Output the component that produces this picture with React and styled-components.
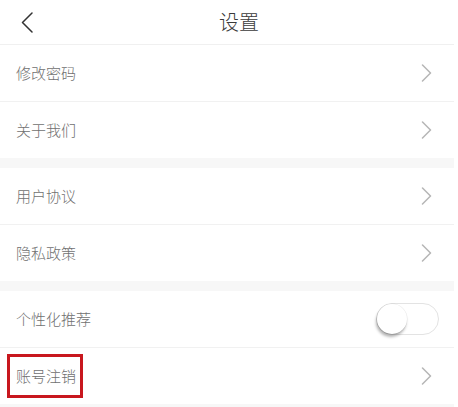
import React, { useState } from 'react';
import styled, { createGlobalStyle } from 'styled-components';

const GlobalStyle = createGlobalStyle`
  html, body {
    margin: 0;
    padding: 0;
    background: #fff;
  }
  body {
    font-family: "Noto Sans CJK SC", "Noto Sans", sans-serif;
  }
`;

const Page = styled.div`
  width: 454px;
  min-height: 407px;
  background: #f7f7f7;
`;

const Header = styled.div`
  display: flex;
  align-items: center;
  height: 44px;
  background: #fff;
  border-bottom: 1px solid #f0f0f0;
`;

const BackButton = styled.div`
  width: 44px;
  height: 44px;
  display: flex;
  align-items: center;
  padding-left: 21px;
  box-sizing: border-box;
`;

const Title = styled.div`
  flex: 1;
  text-align: center;
  font-size: 20px;
  font-weight: 300;
  color: #3a3a3a;
  line-height: 44px;
`;

const HeaderSpacer = styled.div`
  width: 20px;
`;

const Section = styled.div`
  background: #fff;
  margin-bottom: 10px;

  &:last-child {
    margin-bottom: 0;
  }
`;

const Row = styled.div`
  display: flex;
  align-items: center;
  justify-content: space-between;
  height: 56px;
  padding: 0 ${(p) => (p.$switch ? 15 : 22)}px 0 16px;
  border-bottom: 1px solid #f1f1f1;

  &:last-child {
    border-bottom: none;
  }
`;

const Label = styled.span`
  position: relative;
  font-size: 15px;
  font-weight: 300;
  line-height: 22px;
  color: #707070;
`;

const Highlight = styled.span`
  position: absolute;
  top: -11px;
  bottom: -11px;
  left: -9px;
  right: -7px;
  border: 3px solid #c8171e;
  box-sizing: border-box;
`;

const Track = styled.div`
  position: relative;
  width: 63px;
  height: 32px;
  box-sizing: border-box;
  border-radius: 16px;
  border: 1px solid #e3e3e3;
  background: ${(p) => (p.$on ? '#e8382f' : '#fff')};
  cursor: pointer;
`;

const Knob = styled.div`
  position: absolute;
  top: 0;
  left: ${(p) => (p.$on ? 31 : 0)}px;
  width: 30px;
  height: 30px;
  border-radius: 50%;
  background: #fff;
  box-shadow: -1px 3px 3px rgba(0, 0, 0, 0.3), 0 0 0 0.5px rgba(0, 0, 0, 0.08);
`;

const Chevron = () => (
  <svg width="11" height="18" viewBox="0 0 11 18" fill="none">
    <path d="M1.5 1 L9.5 9 L1.5 17" stroke="#b5b5b5" strokeWidth="1.5" strokeLinecap="round" strokeLinejoin="round" />
  </svg>
);

const BackIcon = () => (
  <svg width="12" height="21" viewBox="0 0 12 21" fill="none">
    <path d="M11 1 L1.5 10.5 L11 20" stroke="#333" strokeWidth="1.5" strokeLinecap="round" strokeLinejoin="round" />
  </svg>
);

const sections = [
  [{ title: '修改密码' }, { title: '关于我们' }],
  [{ title: '用户协议' }, { title: '隐私政策' }],
  [{ title: '个性化推荐', toggle: true }, { title: '账号注销', marked: true }],
];

export default function App() {
  const [personal, setPersonal] = useState(false);

  return (
    <>
      <GlobalStyle />
      <Page>
        <Header>
          <BackButton>
            <BackIcon />
          </BackButton>
          <Title>设置</Title>
          <HeaderSpacer />
        </Header>
        {sections.map((rows, i) => (
          <Section key={i}>
            {rows.map((row) => (
              <Row key={row.title} $switch={row.toggle}>
                <Label>
                  {row.title}
                  {row.marked && <Highlight />}
                </Label>
                {row.toggle ? (
                  <Track $on={personal} onClick={() => setPersonal(!personal)}>
                    <Knob $on={personal} />
                  </Track>
                ) : (
                  <Chevron />
                )}
              </Row>
            ))}
          </Section>
        ))}
      </Page>
    </>
  );
}
